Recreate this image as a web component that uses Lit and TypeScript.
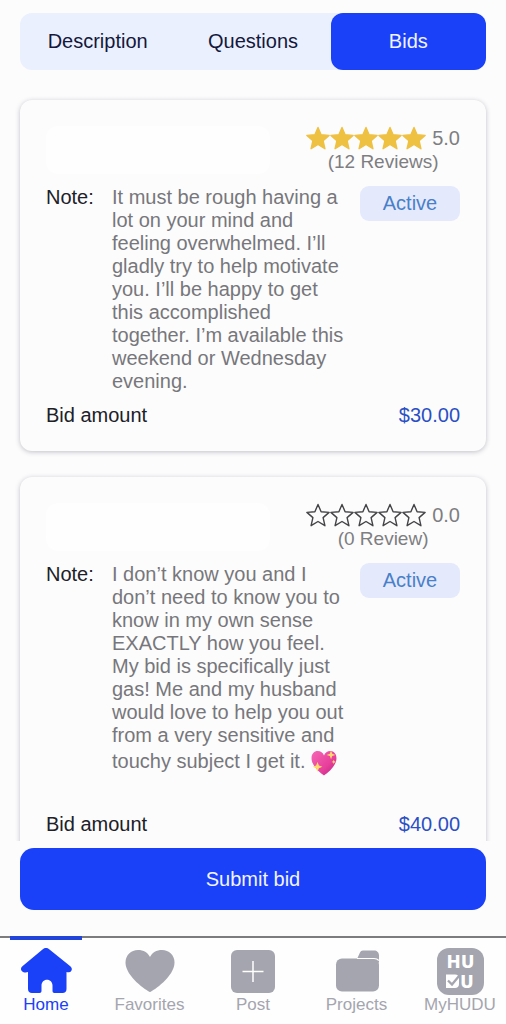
import { LitElement, html, css, svg, nothing } from "lit";
import { customElement, property, state } from "lit/decorators.js";
import { classMap } from "lit/directives/class-map.js";

interface Bid {
  rating: number;
  reviews: string;
  note: string;
  heart: boolean;
  amount: string;
}

const BIDS: Bid[] = [
  {
    rating: 5,
    reviews: "(12 Reviews)",
    note: "It must be rough having a lot on your mind and feeling overwhelmed. I’ll gladly try to help motivate you. I’ll be happy to get this accomplished together. I’m available this weekend or Wednesday evening.",
    heart: false,
    amount: "$30.00",
  },
  {
    rating: 0,
    reviews: "(0 Review)",
    note: "I don’t know you and I don’t need to know you to know in my own sense EXACTLY how you feel. My bid is specifically just gas! Me and my husband would love to help you out from a very sensitive and touchy subject I get it. ",
    heart: true,
    amount: "$40.00",
  },
];

const TABS = ["Description", "Questions", "Bids"];

const NAV = [
  {
    label: "Home",
    icon: svg`<path fill="currentColor" d="M26 1c1.600 0 2.600.700 3.800 1.700L50.300 19.200c1.700 1.400 2 3.300.900 4.700-1.100 1.500-3 1.800-4.700 1.100V42c0 2.500-1.500 4-4 4H34.500c-1.300 0-2-.700-2-2v-5.500c0-3.400-2.400-5.700-5.500-5.700s-5.500 2.300-5.500 5.700V44c0 1.300-.700 2-2 2H12c-2.500 0-4-1.500-4-4V25c-1.700.700-4.500.700-6.200-1.100-1.300-1.400-1.100-3.300.600-4.700L22.200 2.700C23.400 1.700 24.400 1 26 1z"/>`,
  },
  {
    label: "Favorites",
    icon: svg`<path fill="currentColor" d="M26 45C23 44 1.500 29.500 1.500 15.500 1.500 8 7 3 14 3c5.500 0 9.800 2.500 12 7 2.200-4.500 6.500-7 12-7 7 0 12.500 5 12.500 12.500C50.500 29.500 29 44 26 45z"/>`,
  },
  {
    label: "Post",
    icon: svg`<rect x="4" y="3" width="44" height="43" rx="6" fill="currentColor"/><path d="M15.500 24.500h21M26 14v21" stroke="#fff" stroke-width="1.500" fill="none"/>`,
  },
  {
    label: "Projects",
    icon: svg`<path fill="currentColor" d="M26 12l3-6.500c.600-1.300 1.500-2 3-2H43c3 0 5 2 5 5v7z"/><rect x="5" y="11.500" width="43" height="33" rx="6" fill="currentColor"/><path d="M26 11.500H43c2 0 3.700.700 4.800 2" stroke="#fff" stroke-width="1.200" fill="none"/>`,
  },
  {
    label: "MyHUDU",
    icon: svg`<rect x="3" y="1" width="47" height="47" rx="12" fill="currentColor"/>
      <text x="26.500" y="21" text-anchor="middle" font-family="DejaVu Sans, sans-serif" font-weight="700" font-size="17" fill="#fff">HU</text>
      <text x="26" y="41" font-family="DejaVu Sans, sans-serif" font-weight="700" font-size="17" fill="#fff">U</text>
      <path d="M12 27.500H21c2.500 0 4 1.500 4 4v5.500c0 2.500-1.500 4-4 4h-9z" fill="#fff"/>
      <path d="M14 33.500l4 4 7-8.500" stroke="currentColor" stroke-width="2.300" fill="none"/>`,
  },
];

@customElement("star-rating")
export class StarRating extends LitElement {
  @property({ type: Number }) value = 0;

  static styles = css`
    :host {
      display: flex;
      align-items: center;
      height: 24px;
      color: #7e7e81;
    }
    .star {
      display: block;
      width: 24px;
      height: 24px;
    }
    .score {
      margin-left: 6px;
    }
  `;

  render() {
    return html`${[1, 2, 3, 4, 5].map(
        (n) => html`<svg class="star" viewBox="0 0 24 24" aria-hidden="true">
          <path
            d="M12 1.500L15.100 8.700l8 .700-6 5.200 1.800 8.100L12 18.500l-6.900 4.200L6.900 14.600.900 9.400 8.900 8.700z"
            fill=${n <= this.value ? "#efc142" : "none"}
            stroke=${n <= this.value ? "#efc142" : "#444447"}
            stroke-width="1.400"
            stroke-linejoin="round"
          />
        </svg>`
      )}<span class="score">${this.value.toFixed(1)}</span>`;
  }
}

@customElement("bid-card")
export class BidCard extends LitElement {
  @property({ attribute: false }) bid!: Bid;

  static styles = css`
    :host {
      display: block;
    }
    .card {
      padding: 26px 26px 24px;
      border-radius: 12px;
      background: #fcfcfd;
      box-shadow: 0 1px 5px rgba(40, 40, 60, 0.28);
    }
    .head {
      display: flex;
      justify-content: space-between;
      gap: 36px;
    }
    .name {
      flex: 1;
      border-radius: 12px;
      background: #fefefe;
    }
    .reviews {
      color: #7e7e81;
      font-size: 19px;
      line-height: 24px;
      text-align: center;
    }
    .body {
      display: grid;
      grid-template-columns: 66px 1fr 100px;
      align-items: start;
      margin-top: 12px;
    }
    .label {
      color: #202027;
    }
    .note {
      margin: 0;
      padding-right: 8px;
      color: #77777b;
    }
    .long {
      padding-bottom: 23px;
    }
    .heart {
      width: 26px;
      height: 32px;
      vertical-align: middle;
    }
    .status {
      border-radius: 9px;
      background: #e4eafb;
      color: #4a7fca;
      line-height: 35px;
      text-align: center;
    }
    .foot {
      display: flex;
      justify-content: space-between;
      margin-top: 11px;
    }
    .amount {
      color: #2b4fc4;
    }
  `;

  private heart() {
    return html`<svg class="heart" viewBox="1 2 24 28" role="img" aria-label="sparkling heart">
      <defs>
        <linearGradient id="pink" x1="0" y1="0" x2="1" y2="1">
          <stop offset="0" stop-color="#f568b5" />
          <stop offset="0.600" stop-color="#e73f9c" />
          <stop offset="1" stop-color="#c02480" />
        </linearGradient>
      </defs>
      <path
        fill="url(#pink)"
        d="M13 27.500C10 25.500 1.500 19 1.500 11.500 1.500 7.500 4 5 7.200 5 10 5 12 6.500 13 9c1-2.500 3-4 5.800-4 3.200 0 5.700 2.500 5.700 6.500C24.500 19 16 25.500 13 27.500z"
      />
      <path fill="#ffdc6b" d="M7 15l1.300 3.200 3.200 1.300-3.200 1.300L7 24l-1.300-3.200-3.200-1.300 3.200-1.300zM19.500 4.500l1.100 2.900 2.900 1.100-2.900 1.100-1.100 2.900-1.100-2.900-2.900-1.100 2.900-1.100zM22 13l.600 1.400 1.400.600-1.400.600L22 17l-.600-1.400L20 15l1.400-.600z" />
    </svg>`;
  }

  render() {
    const b = this.bid;
    return html`<article class="card">
      <div class="head">
        <div class="name"></div>
        <div>
          <star-rating .value=${b.rating}></star-rating>
          <div class="reviews">${b.reviews}</div>
        </div>
      </div>
      <div class="body">
        <span class="label">Note:</span>
        <p class=${classMap({ note: true, long: b.heart })}>${b.note}${b.heart ? this.heart() : nothing}</p>
        <span class="status">Active</span>
      </div>
      <div class="foot">
        <span class="label">Bid amount</span>
        <span class="amount">${b.amount}</span>
      </div>
    </article>`;
  }
}

@customElement("app-root")
export class AppRoot extends LitElement {
  @state() private tab = "Bids";

  static styles = css`
    :host {
      display: flex;
      flex-direction: column;
      height: 100vh;
      background: #fcfcfd;
      color: #202027;
      font-family: "Liberation Sans", Arial, sans-serif;
      font-size: 20px;
      line-height: 23px;
    }
    button {
      border: 0;
      padding: 0;
      font: inherit;
      cursor: pointer;
    }
    .tabs {
      display: grid;
      grid-template-columns: repeat(3, 1fr);
      margin: 13px 20px 0;
      border-radius: 12px;
      background: #eaf0fe;
    }
    .tab {
      height: 57px;
      border-radius: 12px;
      background: none;
      color: #14183c;
    }
    .tab.active {
      background: #1a40f8;
      color: #f2f4ff;
    }
    .list {
      flex: 1;
      min-height: 0;
      display: flex;
      flex-direction: column;
      gap: 26px;
      margin-top: 20px;
      padding: 10px 20px;
      overflow-y: auto;
      scrollbar-width: none;
    }
    .submit {
      flex: none;
      height: 62px;
      margin: 7px 20px 26px;
      border-radius: 14px;
      background: #1a40f8;
      color: #f2f4ff;
    }
    .nav {
      display: flex;
      justify-content: space-between;
      padding: 0 10px 9px;
      border-top: 2px solid #7c7c7e;
      background: #fefefe;
    }
    .item {
      display: flex;
      flex-direction: column;
      align-items: center;
      width: 72px;
      margin-top: -2px;
      padding-top: 7px;
      border-top: 4px solid transparent;
      color: #a4a5ae;
      font-size: 17px;
      line-height: 20px;
      text-decoration: none;
    }
    .item.current {
      border-top-color: #2344d8;
      color: #1a40f8;
    }
    .icon {
      display: block;
      width: 52px;
      height: 48px;
    }
  `;

  render() {
    return html`
      <div class="tabs" role="tablist">
        ${TABS.map(
          (t) => html`<button
            class=${classMap({ tab: true, active: t === this.tab })}
            role="tab"
            aria-selected=${t === this.tab ? "true" : "false"}
            @click=${() => (this.tab = t)}
          >${t}</button>`
        )}
      </div>
      <main class="list">${BIDS.map((b) => html`<bid-card .bid=${b}></bid-card>`)}</main>
      <button class="submit">Submit bid</button>
      <nav class="nav">
        ${NAV.map(
          (n, i) => html`<a class=${classMap({ item: true, current: i === 0 })} href="#${n.label.toLowerCase()}">
            <svg class="icon" viewBox="0 0 52 48" aria-hidden="true">${n.icon}</svg>
            <span>${n.label}</span>
          </a>`
        )}
      </nav>
    `;
  }
}
